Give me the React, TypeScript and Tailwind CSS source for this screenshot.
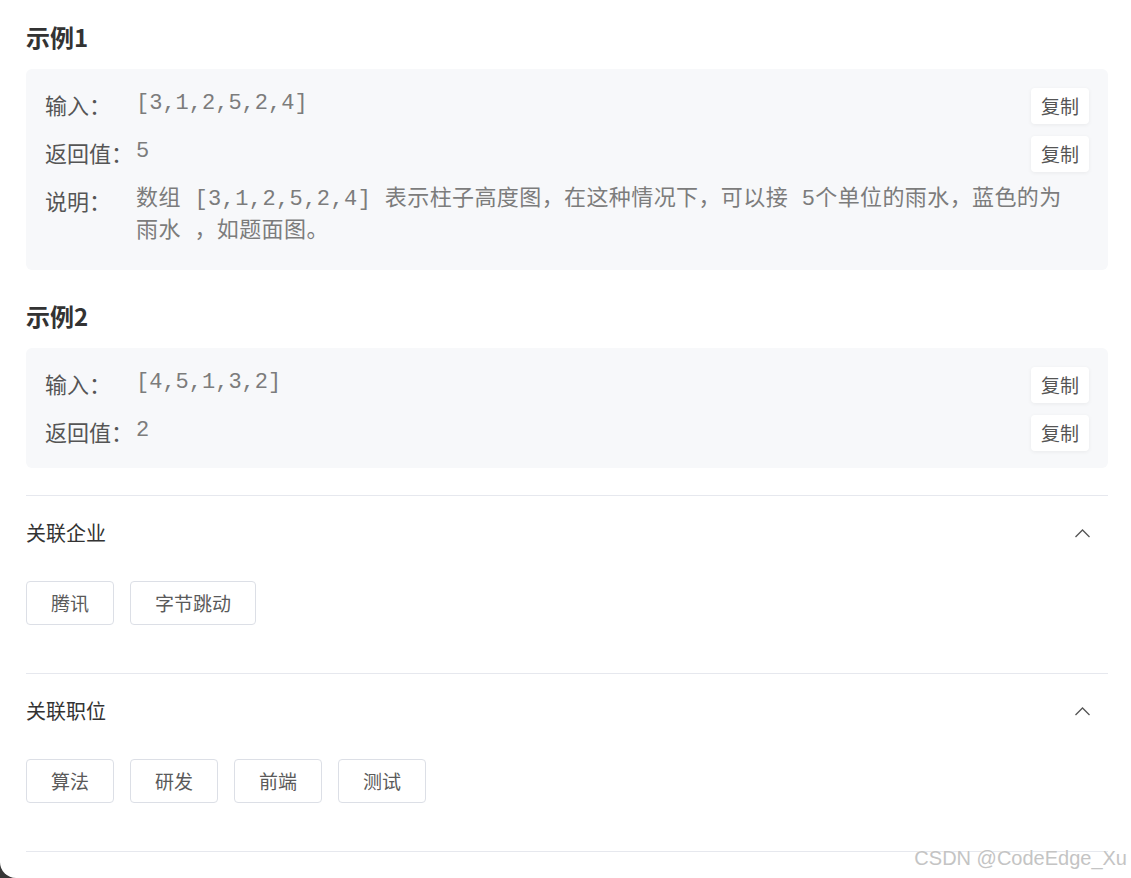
import React from "react";

const sans = { fontFamily: '"Noto Sans CJK SC", "Noto Sans", sans-serif' };
const mono = { fontFamily: '"Liberation Mono", "Noto Sans CJK SC", monospace' };

function CopyBtn() {
  return (
    <button
      className="h-[36px] w-[58px] shrink-0 rounded-[4px] bg-white text-[19px] leading-[36px] text-[#555] shadow-[0_1px_4px_rgba(0,0,0,0.06)]"
      style={sans}
    >
      复制
    </button>
  );
}

function Row({
  label,
  children,
  copy,
  wide,
}: {
  label: string;
  children: React.ReactNode;
  copy?: boolean;
  wide?: boolean;
}) {
  return (
    <div className="flex items-start">
      <div className="w-[91px] shrink-0 text-[22px] leading-[32px] text-[#555]" style={sans}>
        {label}
      </div>
      <div
        className={
          wide
            ? "flex-1 text-[22px] leading-[32px] tracking-[0.4px] text-[#7c7c7c]"
            : "flex-1 text-[22px] leading-[32px] text-[#7c7c7c]"
        }
        style={mono}
      >
        {children}
      </div>
      {copy && <CopyBtn />}
    </div>
  );
}

function Chevron() {
  return (
    <svg width="17" height="10" viewBox="0 0 17 10" fill="none">
      <path d="M1.5 9 L8.5 2 L15.5 9" stroke="#555" strokeWidth="1.3" />
    </svg>
  );
}

function Tag({ text }: { text: string }) {
  return (
    <div
      className="flex h-[44px] items-center rounded-[4px] border border-[#dcdfe6] px-[24px] text-[19px] text-[#5a5a5a]"
      style={sans}
    >
      {text}
    </div>
  );
}

function Section({ title, tags }: { title: string; tags: string[] }) {
  return (
    <div className="border-t border-[#e6e8ee]">
      <div className="flex items-center justify-between pt-[23px] pr-[17px]">
        <div className="text-[20px] leading-[28px] text-[#333]" style={sans}>
          {title}
        </div>
        <Chevron />
      </div>
      <div className="mt-[34px] mb-[48px] flex gap-[16px]">
        {tags.map((t) => (
          <Tag key={t} text={t} />
        ))}
      </div>
    </div>
  );
}

export default function App() {
  return (
    <div className="h-[878px] w-[1131px] overflow-hidden bg-[#363636]">
      <div className="relative h-full w-full rounded-bl-[16px] bg-white">
        <div className="ml-[26px] w-[1082px] pt-[21px]">
          <h2 className="text-[24px] font-bold leading-[32px] text-[#333]" style={sans}>
            示例1
          </h2>
          <div className="mt-[16px] flex flex-col gap-[12px] rounded-[6px] bg-[#f7f8fa] pt-[19px] pr-[19px] pb-[22px] pl-[19px]">
            <Row label="输入：" copy>
              {"[3,1,2,5,2,4]"}
            </Row>
            <Row label="返回值：" copy>
              5
            </Row>
            <Row label="说明：" wide>
              数组 [3,1,2,5,2,4] 表示柱子高度图，在这种情况下，可以接 5个单位的雨水，蓝色的为
              <br />
              雨水 ，如题面图。
            </Row>
          </div>

          <h2 className="mt-[30px] text-[24px] font-bold leading-[32px] text-[#333]" style={sans}>
            示例2
          </h2>
          <div className="mt-[16px] flex flex-col gap-[12px] rounded-[6px] bg-[#f7f8fa] pt-[19px] pr-[19px] pb-[17px] pl-[19px]">
            <Row label="输入：" copy>
              {"[4,5,1,3,2]"}
            </Row>
            <Row label="返回值：" copy>
              2
            </Row>
          </div>

          <div className="mt-[27px]">
            <Section title="关联企业" tags={["腾讯", "字节跳动"]} />
            <Section title="关联职位" tags={["算法", "研发", "前端", "测试"]} />
            <div className="border-t border-[#e6e8ee]" />
          </div>
        </div>

        <div
          className="absolute right-[4px] top-[845px] text-[20px] leading-[26px] text-[#c4c4c4] [text-shadow:0_0_1px_#fff,0_0_1px_#fff]"
          style={{ fontFamily: '"Liberation Sans", Arial, sans-serif' }}
        >
          CSDN @CodeEdge_Xu
        </div>
      </div>
    </div>
  );
}
